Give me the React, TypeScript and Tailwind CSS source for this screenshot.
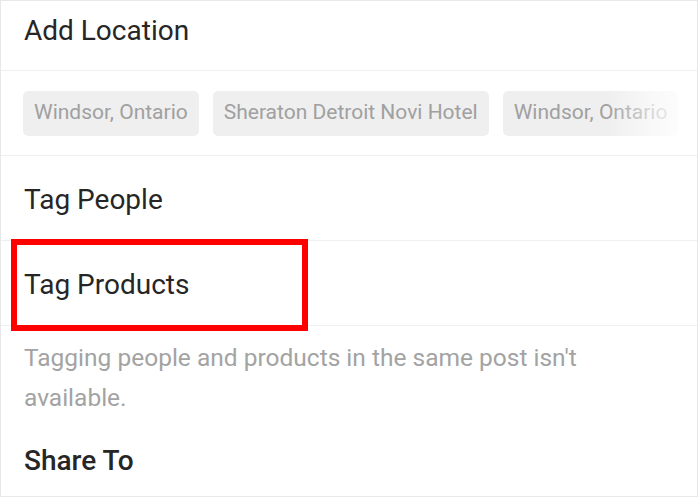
import React from "react"

const locations = ["Windsor, Ontario", "Sheraton Detroit Novi Hotel", "Windsor, Ontario"]

const Row = ({ label, boxed }: { label: string; boxed?: boolean }) => (
  <div className="relative h-[85px] border-b border-[#efefef] px-[23px] pt-[24px]">
    <span className="text-[28px] leading-[40px] text-[#262626]">{label}</span>
    {/* Highlight frame drawn over the row */}
    {boxed && (
      <div className="pointer-events-none absolute left-[10px] top-[-2px] h-[92px] w-[297px] border-[6px] border-[#ff0000]" />
    )}
  </div>
)

const App = () => {
  return (
    <div
      className="h-[497px] w-[700px] overflow-hidden bg-white"
      style={{ fontFamily: "Roboto, 'Noto Sans', sans-serif" }}
    >
      <div className="flex h-[497px] w-[698px] flex-col border border-[#e8e8e8]">
        {/* Add Location */}
        <div className="h-[70px] border-b border-[#efefef] px-[23px] pt-[10px]">
          <span className="text-[28px] leading-[40px] text-[#262626]">Add Location</span>
        </div>

        {/* Suggested locations */}
        <div className="relative flex h-[85px] items-center gap-[14px] overflow-hidden border-b border-[#efefef] pl-[22px]">
          {locations.map((loc, i) => (
            <div
              key={i}
              className="flex h-[45px] shrink-0 items-center rounded-[5px] bg-[#efefef] px-[11px] text-[21px] text-[#a0a0a0]"
            >
              {loc}
            </div>
          ))}
          <div className="pointer-events-none absolute right-0 top-0 h-full w-[90px] bg-gradient-to-r from-white/0 via-white/60 to-white" />
        </div>

        <Row label="Tag People" />
        <Row label="Tag Products" boxed />

        {/* Notice */}
        <p className="px-[23px] pt-[12px] text-[24.5px] leading-[40px] text-[#a3a3a3]">
          Tagging people and products in the same post isn't available.
        </p>

        {/* Share To */}
        <div className="px-[23px] pt-[23px]">
          <span className="text-[28px] font-medium leading-[40px] text-[#262626]">Share To</span>
        </div>
      </div>
    </div>
  )
}

export default App
